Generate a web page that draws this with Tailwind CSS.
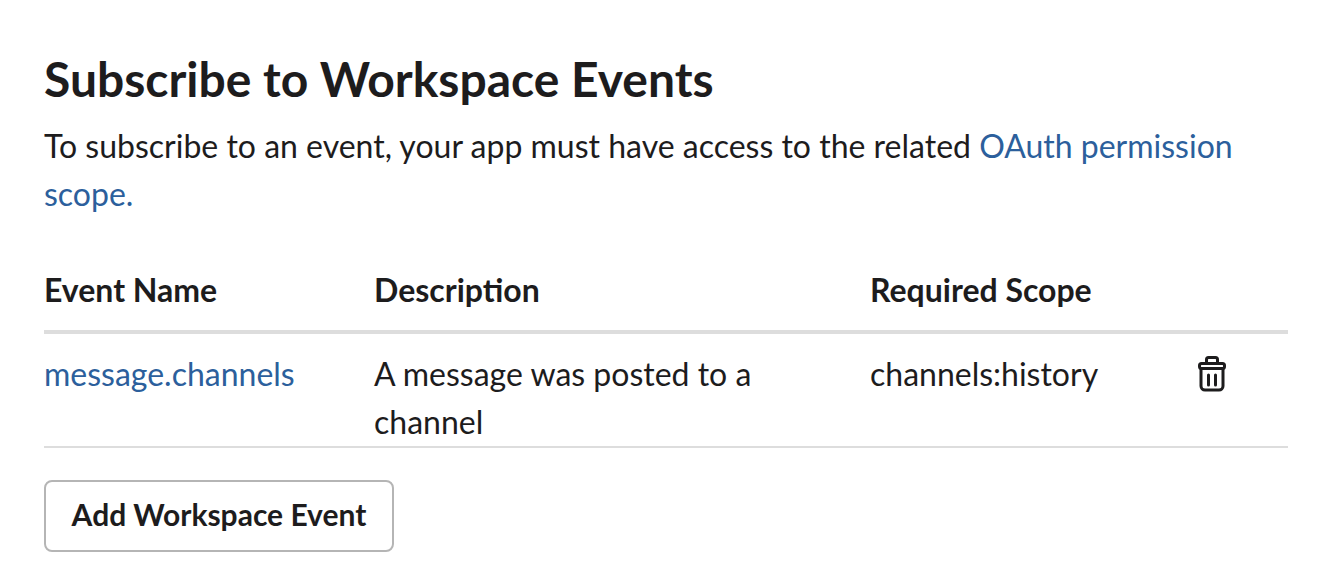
<!DOCTYPE html>
<html lang="en">
<head>
    <meta charset="UTF-8">
    <title>Subscribe to Workspace Events</title>
    <script src="https://cdn.jsdelivr.net/npm/@tailwindcss/browser@4"></script>
</head>
<body class="bg-white font-['Lato','Liberation_Sans',sans-serif] text-[#1d1c1d] overflow-hidden">

<div class="pl-[44px] pr-[48px] pt-[51px]">
    <h2 class="text-[48px] leading-[56px] font-bold">Subscribe to Workspace Events</h2>
    <p class="mt-[15px] text-[32px] leading-[48px]">To subscribe to an event, your app must have access to the related <a href="#" class="text-[#2c5f9c]">OAuth permission scope.</a></p>

    <!-- Events table -->
    <div class="mt-[36px] grid grid-cols-[330px_496px_1fr] text-[32px] leading-[48px]">
        <div class="font-bold h-[80px] pt-[12px] border-b-[4px] border-[#dddddd]">Event Name</div>
        <div class="font-bold h-[80px] pt-[12px] border-b-[4px] border-[#dddddd]">Description</div>
        <div class="font-bold h-[80px] pt-[12px] border-b-[4px] border-[#dddddd]">Required Scope</div>

        <div class="h-[114px] pt-[16px] border-b-2 border-[#dddddd]"><a href="#" class="text-[#2c5f9c]">message.channels</a></div>
        <div class="h-[114px] pt-[16px] border-b-2 border-[#dddddd] pr-[100px]">A message was posted to a channel</div>
        <div class="h-[114px] pt-[16px] border-b-2 border-[#dddddd] flex justify-between pr-[61px]">
            <span>channels:history</span>
            <svg class="mt-[5px]" width="30" height="38" viewBox="0 0 30 38" fill="none" stroke="#1d1c1d" stroke-width="3" stroke-linecap="round" stroke-linejoin="round">
                <path d="M9.5 8V4.5a2 2 0 0 1 2-2h7a2 2 0 0 1 2 2V8"/>
                <rect x="2.5" y="8.5" width="25" height="5" rx="2"/>
                <path d="M4 13.5V31a4 4 0 0 0 4 4h14a4 4 0 0 0 4-4V13.5"/>
                <path d="M11.5 20v10M18.5 20v10"/>
            </svg>
        </div>
    </div>

    <button class="mt-[32px] h-[72px] w-[350px] rounded-[8px] border-2 border-[#b5b5b5] bg-white text-[30px] leading-[64px] font-bold"><span class="block -translate-y-[2px]">Add Workspace Event</span></button>
</div>

</body>
</html>
